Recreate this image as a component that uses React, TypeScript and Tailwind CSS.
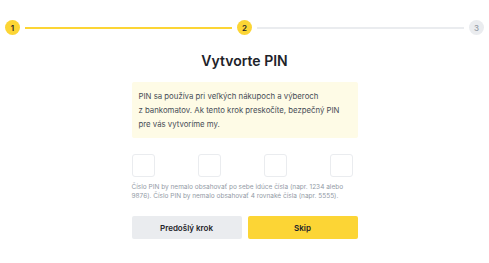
export default function App() {
  return (
    <div className="flex h-[263px] w-[489px] flex-col bg-white font-['Inter',sans-serif] text-[#1e2329]">
      {/* Stepper */}
      <div className="mt-[20px] flex items-center px-[5px]">
        <div className="flex h-[15px] w-[15px] shrink-0 items-center justify-center rounded-full bg-[#fcd535] text-[8px] font-semibold">
          1
        </div>
        <div className="mx-[5px] h-[2px] flex-1 bg-[#fcd535]" />
        <div className="flex h-[15px] w-[15px] shrink-0 items-center justify-center rounded-full bg-[#fcd535] text-[8px] font-semibold">
          2
        </div>
        <div className="mx-[5px] h-[2px] flex-1 bg-[#eaecef]" />
        <div className="flex h-[15px] w-[15px] shrink-0 items-center justify-center rounded-full bg-[#eaecef] text-[8px] font-medium text-[#929aa5]">
          3
        </div>
      </div>

      <div className="mx-auto mt-[17px] flex w-[226px] flex-col">
        <h1 className="text-center text-[14px] font-semibold leading-[18px]">Vytvorte PIN</h1>

        <div className="mt-[12px] rounded-[2px] bg-[#fefbe6] px-[7px] py-[7px] text-[7.8px] leading-[14px] text-[#474d57]">
          PIN sa používa pri veľkých nákupoch a výberoch
          <br />
          z bankomatov. Ak tento krok preskočíte, bezpečný PIN
          <br />
          pre vás vytvoríme my.
        </div>

        <div className="mt-[16px] flex w-[222px] justify-between">
          {[0, 1, 2, 3].map((i) => (
            <div key={i} className="h-[23px] w-[23px] rounded-[3px] border border-[#eaecef]" />
          ))}
        </div>

        <p className="mt-[6px] text-[6.5px] leading-[9px] text-[#929aa5]">
          Číslo PIN by nemalo obsahovať po sebe idúce čísla (napr. 1234 alebo 9876). Číslo PIN by nemalo
          obsahovať 4 rovnaké čísla (napr. 5555).
        </p>

        <div className="mt-[15px] flex gap-[6px]">
          <button className="h-[23px] flex-1 rounded-[2px] bg-[#eaecef] text-[8px] font-semibold text-[#1e2329]">
            Predošlý krok
          </button>
          <button className="h-[23px] flex-1 rounded-[2px] bg-[#fcd535] text-[8px] font-semibold text-[#1e2329]">
            Skip
          </button>
        </div>
      </div>
    </div>
  );
}
